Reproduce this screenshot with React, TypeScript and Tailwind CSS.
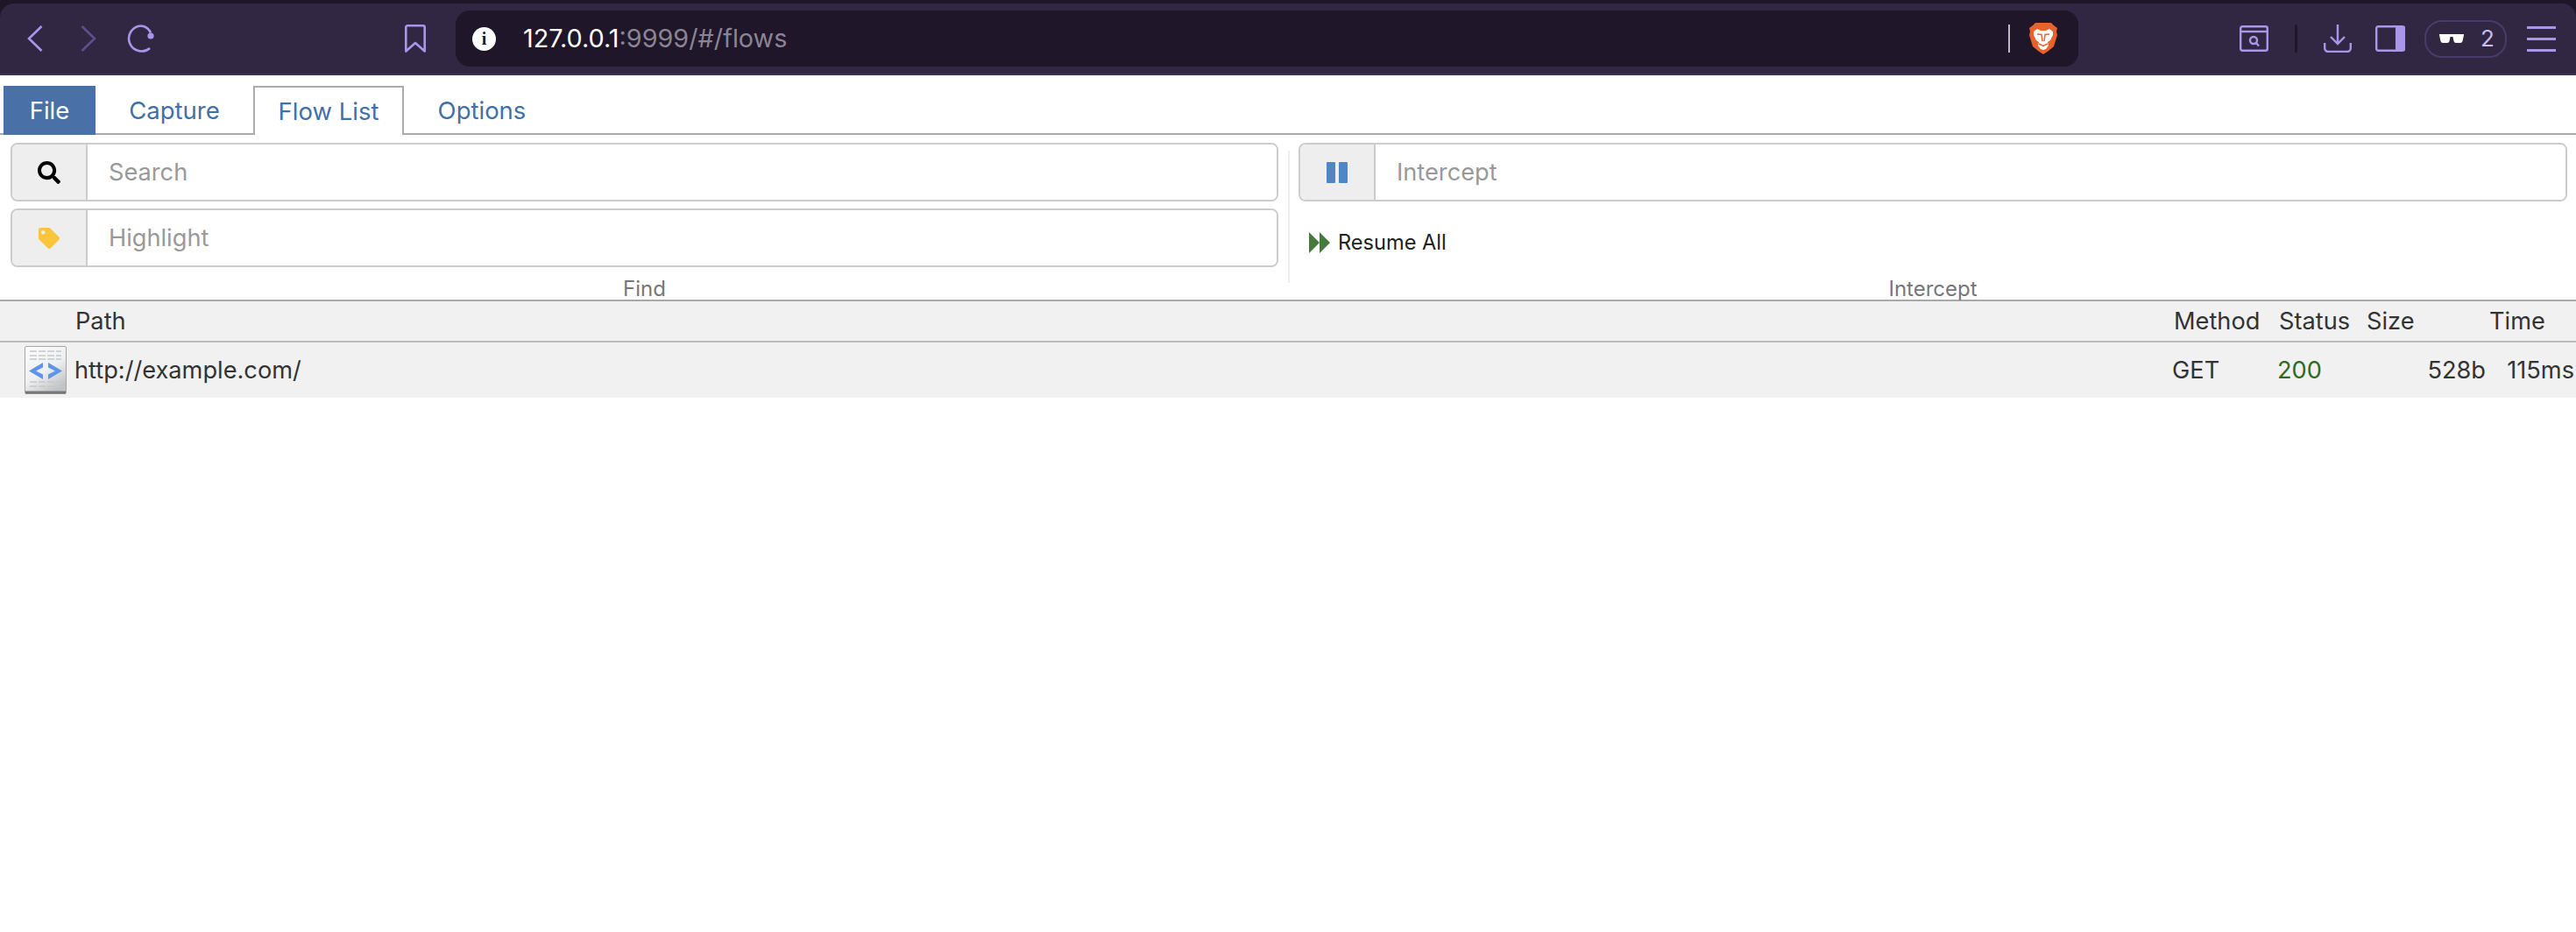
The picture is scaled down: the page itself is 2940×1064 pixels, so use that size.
import { FaSearch, FaTag } from 'react-icons/fa';

const iconColor = '#a996ea';

function BraveLion() {
  return (
    <svg viewBox="0 0 32 36" className="h-[36px] w-[32px]">
      <path d="M7 0H25L28 3 32 6 31 10 32 14 28 27 22 32 16 36 10 32 4 27 0 14 1 10 0 6 4 3Z" fill="#e8622c" />
      <path d="M9 7L13 9H19L23 7 27 10V14L24 20 21 22 22 26 19 30 16 31 13 30 10 26 11 22 8 20 5 14V10Z" fill="#fff" />
      <path d="M9 13L14 13.5 15 21M23 13L18 13.5 17 21M11 24L16 26.5 21 24" fill="none" stroke="#e8622c" strokeWidth="1.5" />
    </svg>
  );
}

function ToolbarIcons() {
  return (
    <div className="flex items-center">
      {/* tab search */}
      <svg viewBox="0 0 33 30" className="ml-[184px] h-[30px] w-[33px]" fill="none" stroke={iconColor} strokeWidth="2.4">
        <rect x="1.2" y="1.2" width="30.6" height="27.6" rx="2" />
        <path d="M1 7h31" />
        <circle cx="16" cy="17" r="4" />
        <path d="M19 20l3 3.5" />
      </svg>
      <div className="ml-[30px] h-[32px] w-[3px] rounded-full bg-[#1f1629]" />
      {/* downloads */}
      <svg viewBox="0 0 32 32" className="ml-[30px] h-[32px] w-[32px]" fill="none" stroke={iconColor} strokeWidth="2.4">
        <path d="M16 0v22M8 14l8 8 8-8" />
        <path d="M1.2 21v6a4 4 0 0 0 4 4h21.6a4 4 0 0 0 4-4v-6" />
      </svg>
      {/* sidebar */}
      <svg viewBox="0 0 34 30" className="ml-[27px] h-[30px] w-[34px]">
        <rect x="1.2" y="1.2" width="31.6" height="27.6" rx="2" fill="none" stroke={iconColor} strokeWidth="2.4" />
        <rect x="23" y="1" width="11" height="28" rx="1" fill={iconColor} />
      </svg>
      <div className="ml-[22px] flex h-[43px] w-[94px] items-center rounded-[20px] border-2 border-[#483b69] pl-[15px]">
        <svg viewBox="0 0 28 10" className="h-[10px] w-[28px]" fill="#fff">
          <path d="M0 0H28V1L26.5 8Q26 10 24 10H19Q17 10 16.5 8L15.5 3H12.5L11.5 8Q11 10 9 10H4Q2 10 1.5 8L0 1Z" />
        </svg>
        <span className="ml-[19px] text-[26px] leading-none text-[#c9bdf0]">2</span>
      </div>
      <div className="ml-[23px] flex w-[33px] flex-col gap-[10px]">
        <div className="h-[3px] bg-[#a996ea]" />
        <div className="h-[3px] bg-[#a996ea]" />
        <div className="h-[3px] bg-[#a996ea]" />
      </div>
    </div>
  );
}

function BrowserBar() {
  return (
    <div className="bg-[#1f1629] pt-[4px]">
      <div className="flex h-[82px] items-center rounded-t-[16px] border-b-2 border-[#3f3355] bg-[#322742] pl-[31px]">
        <svg viewBox="0 0 18 30" className="h-[30px] w-[18px]" fill="none" stroke={iconColor} strokeWidth="2.6">
          <path d="M16.5 1L2 15l14.5 14" />
        </svg>
        <svg viewBox="0 0 18 30" className="ml-[43px] h-[30px] w-[18px]" fill="none" stroke="#5f4f8e" strokeWidth="2.6">
          <path d="M1.5 1L16 15 1.5 29" />
        </svg>
        <svg viewBox="0 0 32 32" className="ml-[34px] h-[32px] w-[32px]" fill="none" stroke={iconColor} strokeWidth="2.6">
          <path d="M17 1.5A14.5 14.5 0 1 0 27 27" />
          <circle cx="28" cy="13" r="3.6" fill={iconColor} stroke="none" />
          <path d="M17 1.5c5 .5 9 3.5 11 8" />
        </svg>
        <svg viewBox="0 0 24 32" className="ml-[286px] h-[32px] w-[24px]" fill="none" stroke={iconColor} strokeWidth="2.6">
          <path d="M1.3 30.5V3a1.7 1.7 0 0 1 1.7-1.7h18A1.7 1.7 0 0 1 22.7 3v27.5L12 21z" strokeLinejoin="round" />
        </svg>
        <div className="ml-[34px] flex h-[64px] w-[1852px] items-center rounded-[16px] bg-[#1f1629] pl-[19px]">
          <div className="flex h-[27px] w-[27px] items-center justify-center rounded-full bg-white font-['Liberation_Serif',serif] text-[20px] font-bold leading-none text-[#1f1629]">
            i
          </div>
          <div className="ml-[31px] flex-1 text-[28.8px] leading-none text-white">
            127.0.0.1<span className="text-[#8b8494]">:9999/#/flows</span>
          </div>
          <div className="h-[32px] w-[2px] bg-[#bdbac2]" />
          <div className="ml-[22px] mr-[24px]">
            <BraveLion />
          </div>
        </div>
        <ToolbarIcons />
      </div>
    </div>
  );
}

function Tabs() {
  return (
    <div className="mt-[12px] flex h-[56px] border-b-2 border-[#a9a9a9] pl-[4px] text-[27.5px] leading-none text-[#3f70a8]">
      <div className="flex h-[56px] w-[105px] items-center justify-center bg-[#4a70a8] pt-px text-white">File</div>
      <div className="flex h-[56px] w-[180px] items-center justify-center pt-px">Capture</div>
      <div className="flex h-[56px] w-[172px] items-center justify-center border-2 border-b-0 border-[#aaa] bg-white pt-px">Flow List</div>
      <div className="flex h-[56px] w-[178px] items-center justify-center pt-px">Options</div>
    </div>
  );
}

function FilterInput({ icon, placeholder }: { icon: React.ReactNode; placeholder: string }) {
  return (
    <div className="flex h-[67px] shrink-0 overflow-hidden rounded-[8px] border-2 border-[#ccc]">
      <div className="flex w-[86px] items-center justify-center border-r-2 border-[#ccc] bg-[#eee]">{icon}</div>
      <input
        placeholder={placeholder}
        className="min-w-0 flex-1 bg-white pb-[-1px] pl-[24px] pt-[2px] text-[27.2px] outline-none placeholder:text-[#999]"
      />
    </div>
  );
}

function Ribbon() {
  return (
    <div className="flex h-[188px] text-[#777]">
      <div className="flex w-[1470px] flex-col gap-[8px] pl-[12px] pr-[11px] pt-[9px]">
        <FilterInput icon={<FaSearch className="text-[26px] text-black" />} placeholder="Search" />
        <FilterInput icon={<FaTag className="text-[24px] text-[#f8c53c]" />} placeholder="Highlight" />
        <div className="mt-[5px] text-center text-[24px] leading-none">Find</div>
      </div>
      <div className="mt-[18px] h-[151px] w-[2px] bg-[#eee]" />
      <div className="flex flex-1 flex-col gap-[8px] pl-[10px] pr-[10px] pt-[9px]">
        <FilterInput
          icon={
            <svg viewBox="0 0 24 24" className="h-[24px] w-[24px]" fill="#4f86c6">
              <rect x="0" y="0" width="10" height="24" rx="1" />
              <rect x="14" y="0" width="10" height="24" rx="1" />
            </svg>
          }
          placeholder="Intercept"
        />
        <div className="flex h-[67px] shrink-0 items-center pl-[12px] pt-[10px]">
          <svg viewBox="0 0 24 24" className="h-[24px] w-[24px]" fill="#467a3c">
            <path d="M0 0l12 12L0 24zM12 0l12 12-12 12z" />
          </svg>
          <span className="ml-[9px] text-[23.6px] leading-none text-[#222]">Resume All</span>
        </div>
        <div className="mt-[5px] text-center text-[24px] leading-none">Intercept</div>
      </div>
    </div>
  );
}

function HtmlFileIcon() {
  return (
    <svg viewBox="0 0 48 55" className="h-[55px] w-[48px] shrink-0">
      <defs>
        <linearGradient id="sheet" x1="0" y1="0" x2="0.6" y2="1">
          <stop offset="0" stopColor="#fdfdfd" />
          <stop offset="0.6" stopColor="#eeeff1" />
          <stop offset="1" stopColor="#c2c3c5" />
        </linearGradient>
      </defs>
      <rect x="0.5" y="0.5" width="47" height="54" rx="1.5" fill="url(#sheet)" stroke="#a6a6a6" />
      <rect x="1" y="51.5" width="46" height="3" fill="#777" />
      <path d="M6 6h36M6 11h36M6 15h36M6 41h36M6 46h36" stroke="#c8c8c8" strokeWidth="1.4" strokeDasharray="8 2" />
      <path d="M21 19L5 28.5 21 38V32.5L13 28.5 21 24.5ZM27 19L43 28.5 27 38V32.5L35 28.5 27 24.5Z" fill="#5f94ea" />
    </svg>
  );
}

function FlowTable() {
  return (
    <div className="text-[27.2px] leading-none text-[#333]">
      <div className="flex h-[49px] items-center border-y-2 border-t-[#a9a9a9] border-b-[#bbb] bg-[#f1f1f1]">
        <div className="flex-1 pl-[86px]">Path</div>
        <div className="w-[120px] pl-[2px]">Method</div>
        <div className="w-[100px] pl-[2px]">Status</div>
        <div className="w-[140px] pl-[2px]">Size</div>
        <div className="w-[101px] pl-[2px]">Time</div>
      </div>
      <div className="flex h-[63px] items-center bg-[#f1f1f1]">
        <div className="flex flex-1 items-center pl-[28px]">
          <HtmlFileIcon />
          <span className="ml-[9px]">http://example.com/</span>
        </div>
        <div className="w-[120px]">GET</div>
        <div className="w-[100px] text-[#2e6b22]">200</div>
        <div className="w-[140px] pr-[2px] text-right">528b</div>
        <div className="w-[101px] pr-[2px] text-right">115ms</div>
      </div>
    </div>
  );
}

export default function App() {
  return (
    <div className="min-h-screen bg-white font-['Inter',sans-serif]">
      <BrowserBar />
      <Tabs />
      <Ribbon />
      <FlowTable />
    </div>
  );
}
